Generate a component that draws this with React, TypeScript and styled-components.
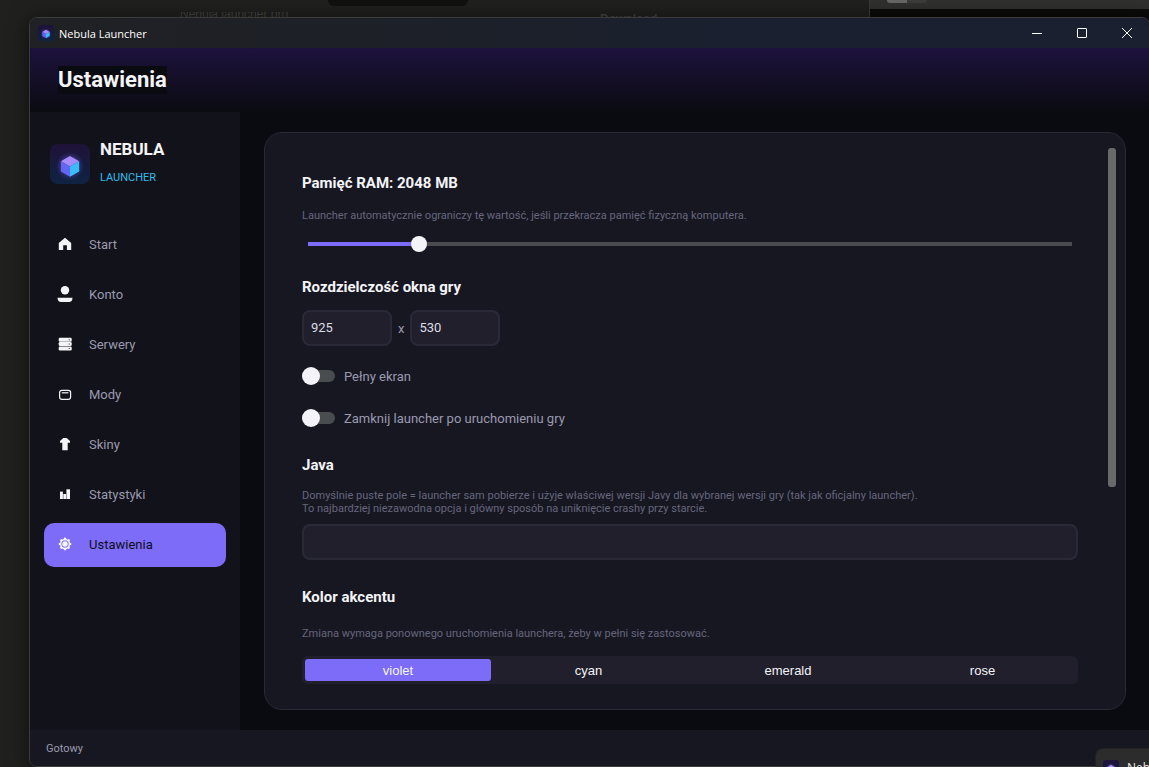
import React, { useState } from "react";
import styled, { createGlobalStyle, css } from "styled-components";

const GlobalStyle = createGlobalStyle`
  * { box-sizing: border-box; }
  html, body, #root { height: 100%; }
  body {
    margin: 0;
    background: #20201e;
    color: #f4f4f8;
    font-family: Roboto, "Liberation Sans", sans-serif;
    font-size: 13px;
    overflow: hidden;
  }
  button, input { font: inherit; color: inherit; }
  h1, h2, p { margin: 0; }
  svg { flex: none; }
`;

const Desktop = styled.div`
  position: relative;
  display: flex;
  flex-direction: column;
  height: 100%;
  overflow: hidden;
  background: #20201e;
`;

const Backdrop = styled.div`
  display: grid;
  grid-template-columns: minmax(0, 869fr) minmax(0, 280fr);
  flex: none;
  height: 25px;
  margin-bottom: -8px;
  overflow: hidden;
`;

const BackdropPage = styled.div`
  display: grid;
  grid-template-columns: 180fr 148fr 140fr 132fr 269fr;
  font: 12px/16px "Liberation Sans", sans-serif;
  color: #444442;
`;

const CardName = styled.span`
  grid-column: 2;
  display: flex;
  align-items: flex-end;
  height: 6px;
  margin-top: 12px;
  overflow: hidden;
  white-space: nowrap;
  line-height: 8px;
`;

const DarkPill = styled.span`
  height: 6px;
  border-radius: 0 0 6px 6px;
  background: #111110;
`;

const CardLink = styled.span`
  grid-column: 5;
  padding-top: 11px;
  font-weight: bold;
`;

const BackdropPanel = styled.div`
  padding-left: 17px;
  border-left: 1px solid #3a3a38;
  background: linear-gradient(#30302e 9px, #0c0c0b 9px);
`;

const PanelGrip = styled.div`
  width: 40px;
  height: 3px;
  border-radius: 0 0 3px 3px;
  background: linear-gradient(90deg, #666664 20px, #3c3c3a 20px);
`;

const Window = styled.main`
  display: flex;
  flex-direction: column;
  flex: 1;
  min-height: 0;
  margin: 0 -1px 0 29px;
  border: 1px solid #3c3c3c;
  border-radius: 8px;
  background: #0a0b10;
  box-shadow: 0 2px 20px rgba(0, 0, 0, 0.6);
  overflow: hidden;
  z-index: 1;
`;

const TitleBar = styled.header`
  display: flex;
  align-items: center;
  flex: none;
  height: 30px;
  padding-left: 8px;
  background: linear-gradient(90deg, #202124, #1c2029 40%, #1a2030 65%);
  font: 11px "Open Sans", "Noto Sans", sans-serif;
  color: #fff;
`;

const TitleText = styled.span`
  flex: 1;
  margin-left: 5px;
`;

const WindowButton = styled.button`
  display: grid;
  place-items: center;
  width: 45px;
  height: 30px;
  padding: 0;
  border: 0;
  background: none;
`;

const PageHeader = styled.div`
  display: flex;
  flex: none;
  align-items: center;
  height: 64px;
  padding-left: 28px;
  background: linear-gradient(#1d123d, #0a0b10);
`;

const PageTitle = styled.h1`
  background: #0a0b10;
  font-size: 22px;
  line-height: 28px;
  font-weight: 700;
`;

const Body = styled.div`
  display: flex;
  flex: 1;
  min-height: 0;
`;

const Sidebar = styled.aside`
  flex: none;
  width: 210px;
  padding: 27px 14px 0;
  background: #12121a;
`;

const Brand = styled.div`
  display: flex;
  gap: 10px;
  height: 84px;
  padding-left: 6px;
`;

const BrandMark = styled.span`
  margin-top: 5px;
`;

const BrandText = styled.div`
  display: grid;
  align-content: start;
  gap: 11px;
`;

const BrandName = styled.strong`
  font-size: 17px;
  line-height: 20px;
`;

const BrandSub = styled.span`
  font-size: 11px;
  line-height: 16px;
  color: #32bbe8;
`;

const Nav = styled.nav`
  display: grid;
  gap: 6px;
`;

const NavItem = styled.button<{ $active: boolean }>`
  display: flex;
  align-items: center;
  gap: 16px;
  height: 44px;
  padding: 0 13px 2px;
  border: 0;
  border-radius: 10px;
  background: ${(p) => (p.$active ? "#7c6cf8" : "transparent")};
  color: ${(p) => (p.$active ? "#0e0d18" : "#9a9aae")};
  text-align: left;
  cursor: pointer;
`;

const Content = styled.section`
  display: flex;
  flex: 1;
  min-width: 0;
  padding: 20px 23px 20px 24px;
`;

const Panel = styled.div`
  display: flex;
  flex: 1;
  min-width: 0;
  gap: 30px;
  padding: 15px 9px 15px 37px;
  border: 1px solid #2a2938;
  border-radius: 18px;
  background: #171722;
`;

const Form = styled.form`
  flex: 1;
  min-width: 0;
  padding-top: 25px;
  overflow: hidden;
`;

const ScrollTrack = styled.div`
  flex: none;
  width: 8px;
`;

const ScrollThumb = styled.div`
  height: 62%;
  border-radius: 3px;
  background: #696969;
`;

const Section = styled.section<{ $top?: number }>`
  margin-top: ${(p) => p.$top ?? 0}px;
`;

const SectionTitle = styled.h2`
  font-size: 15px;
  line-height: 20px;
  font-weight: 700;
`;

const Hint = styled.p<{ $top: number }>`
  margin-top: ${(p) => p.$top}px;
  font-size: 11px;
  line-height: 13px;
  color: #66667c;
`;

const Slider = styled.input`
  appearance: none;
  display: block;
  width: 100%;
  height: 16px;
  margin: 14px 0 0;
  background: none;

  &::-webkit-slider-runnable-track {
    height: 16px;
    background: linear-gradient(90deg, #7c6cf8 var(--fill), #4a4a4f var(--fill)) center / calc(100% - 12px) 4px no-repeat;
  }
  &::-webkit-slider-thumb {
    appearance: none;
    width: 16px;
    height: 16px;
    border-radius: 50%;
    background: #f4f4f8;
  }
`;

const field = css`
  height: 36px;
  padding: 0 7px 2px;
  border: 2px solid #2a2938;
  border-radius: 8px;
  background: #201f2b;
  color: #dcdce4;
  outline: 0;
`;

const SizeRow = styled.div`
  display: flex;
  align-items: center;
  gap: 6px;
  margin-top: 13px;
  color: #9a9aae;
`;

const SizeInput = styled.input`
  ${field}
  width: 90px;
`;

const PathInput = styled.input`
  ${field}
  display: block;
  width: 100%;
  margin-top: 9px;
`;

const SwitchRow = styled.label`
  display: flex;
  align-items: center;
  gap: 9px;
  height: 24px;
  margin-top: 18px;
  color: #9a9aae;
`;

const Switch = styled.input`
  appearance: none;
  display: grid;
  align-items: center;
  width: 33px;
  height: 18px;
  margin: 0;

  &::before, &::after { content: ""; grid-area: 1 / 1; }
  &::before { height: 12px; border-radius: 6px; background: #4a4d50; }
  &:checked::before { background: #7c6cf8; }
  &::after { width: 18px; height: 18px; border-radius: 50%; background: #f4f4f8; }
  &:checked::after { justify-self: end; }
`;

const Segments = styled.div`
  display: grid;
  grid-template-columns: 186fr 195fr 204fr 185fr;
  height: 28px;
  margin-top: 16px;
  padding: 3px;
  border-radius: 6px;
  background: #201f2b;
  font-family: "Liberation Sans", Arial, sans-serif;
`;

const Segment = styled.label`
  display: grid;
  place-items: center;
  border-radius: 3px;
  color: #f4f4f8;
  &:has(input:checked) { background: #7c6cf8; }
`;

const HiddenRadio = styled.input`
  appearance: none;
  position: absolute;
  margin: 0;
`;

const StatusBar = styled.footer`
  display: flex;
  align-items: center;
  flex: none;
  height: 36px;
  padding-left: 16px;
  background: #171722;
  font-size: 11px;
  color: #9a9aae;
`;

const Preview = styled.div`
  position: absolute;
  right: 0;
  bottom: 0;
  z-index: 2;
  display: flex;
  gap: 8px;
  width: 54px;
  height: 19px;
  padding: 11px 0 0 7px;
  border: 1px solid #222;
  border-width: 1px 0 0 1px;
  border-radius: 8px 0 0 0;
  background: #2c2c2c;
  color: #e8e8e8;
  font: 12px/16px "Open Sans", sans-serif;
  white-space: nowrap;
  overflow: hidden;
`;

function CubeLogo({ size, id }: { size: number; id: string }) {
  return (
    <svg width={size} height={size} viewBox="0 0 40 40" display="block">
      <defs>
        <linearGradient id={`${id}-bg`} x1="0" y1="0" x2="0" y2="1">
          <stop offset="0" stopColor="#1f1238" />
          <stop offset="1" stopColor="#0f2342" />
        </linearGradient>
        <radialGradient id={`${id}-glow`}>
          <stop offset="0.5" stopColor="#6d5cf0" stopOpacity="0.4" />
          <stop offset="1" stopColor="#6d5cf0" stopOpacity="0" />
        </radialGradient>
      </defs>
      <rect width="40" height="40" rx="8" fill={`url(#${id}-bg)`} />
      <circle cx="20" cy="22" r="14" fill={`url(#${id}-glow)`} />
      <path d="M20 12l9.200 5.200-9.200 5.300-9.200-5.300z" fill="#a78bfa" />
      <path d="M10.800 17.200l9.200 5.300v10.300l-9.200-5.300z" fill="#6366f1" />
      <path d="M29.200 17.200L20 22.500v10.300l9.200-5.300z" fill="#38bdf8" />
    </svg>
  );
}

const gearTeeth = [0, 45, 90, 135, 180, 225, 270, 315];

const icons: Record<string, React.ReactNode> = {
  Start: <path d="M8 1.800L14.200 7v7h-4.300V9.300H6.200V14H1.800V7z" />,
  Konto: (
    <>
      <circle cx="8" cy="4.200" r="4.200" />
      <path d="M.5 11.700h15c0 3-1.500 4.300-3.500 4.300H4C2 16 .5 14.700.5 11.700z" />
    </>
  ),
  Serwery: (
    <>
      <rect x="1.700" y="1.800" width="13" height="4" rx="1.200" />
      <rect x="1.700" y="6.100" width="13" height="3.800" rx="1.200" />
      <rect x="1.700" y="10.500" width="13" height="4" rx="1.200" />
      <g fill="#12121a">
        <circle cx="12.200" cy="3.800" r=".6" />
        <circle cx="12.200" cy="8" r=".6" />
        <circle cx="12.200" cy="12.500" r=".6" />
      </g>
    </>
  ),
  Mody: (
    <g fill="none" stroke="#f4f4f8" strokeWidth="1.200">
      <rect x="2.600" y="4.300" width="11" height="9" rx="2.200" />
      <path d="M4.800 6.800h6.600" />
    </g>
  ),
  Skiny: <path d="M6.300 2h3.400L13 5v1.700h-2.300v7.600H5.300V6.700H3V5z" />,
  Statystyki: (
    <>
      <path d="M3 5.600h2.900V13H3z" />
      <path d="M6.300 8h2.700v5H6.300z" />
      <path d="M9.400 3.300H13V13H9.400z" />
    </>
  ),
  Ustawienia: (
    <>
      <circle cx="8" cy="8" r="2.700" />
      <circle cx="8" cy="8" r="4.400" fill="none" stroke="#f4f4f8" strokeWidth="1.500" />
      {gearTeeth.map((angle) => (
        <circle key={angle} cx="8" cy="2.900" r="1.300" transform={`rotate(${angle} 8 8)`} />
      ))}
    </>
  ),
};

const accents = ["violet", "cyan", "emerald", "rose"];
const MIN_RAM = 1024;
const MAX_RAM = 8192;

export default function App() {
  const [page, setPage] = useState("Ustawienia");
  const [ram, setRam] = useState(2048);
  const [accent, setAccent] = useState("violet");
  const fill = ((ram - MIN_RAM) / (MAX_RAM - MIN_RAM)) * 100;

  return (
    <Desktop>
      <GlobalStyle />
      <Backdrop aria-hidden="true">
        <BackdropPage>
          <CardName>Nebula launcher pro</CardName>
          <DarkPill />
          <CardLink>Download</CardLink>
        </BackdropPage>
        <BackdropPanel>
          <PanelGrip />
        </BackdropPanel>
      </Backdrop>

      <Window>
        <TitleBar>
          <CubeLogo size={16} id="title" />
          <TitleText>Nebula Launcher</TitleText>
          <WindowButton aria-label="Minimalizuj">
            <svg width="10" height="10" stroke="#fff"><path d="M0 5.500h10" /></svg>
          </WindowButton>
          <WindowButton aria-label="Maksymalizuj">
            <svg width="10" height="10" stroke="#fff" fill="none"><rect x=".5" y=".5" width="9" height="9" rx=".5" /></svg>
          </WindowButton>
          <WindowButton aria-label="Zamknij">
            <svg width="10" height="10" stroke="#fff"><path d="M0 0l10 10M10 0L0 10" /></svg>
          </WindowButton>
        </TitleBar>

        <PageHeader>
          <PageTitle>Ustawienia</PageTitle>
        </PageHeader>

        <Body>
          <Sidebar>
            <Brand>
              <BrandMark><CubeLogo size={40} id="brand" /></BrandMark>
              <BrandText>
                <BrandName>NEBULA</BrandName>
                <BrandSub>LAUNCHER</BrandSub>
              </BrandText>
            </Brand>
            <Nav>
              {Object.keys(icons).map((name) => (
                <NavItem key={name} $active={page === name} onClick={() => setPage(name)}>
                  <svg width="16" height="16" viewBox="0 0 16 16" fill="#f4f4f8">{icons[name]}</svg>
                  {name}
                </NavItem>
              ))}
            </Nav>
          </Sidebar>

          <Content>
            <Panel>
              <Form>
                <Section>
                  <SectionTitle>Pamięć RAM: {ram} MB</SectionTitle>
                  <Hint $top={16}>Launcher automatycznie ograniczy tę wartość, jeśli przekracza pamięć fizyczną komputera.</Hint>
                  <Slider
                    type="range"
                    aria-label="Pamięć RAM"
                    min={MIN_RAM}
                    max={MAX_RAM}
                    value={ram}
                    onChange={(e) => setRam(Number(e.target.value))}
                    style={{ "--fill": `${fill}%` } as React.CSSProperties}
                  />
                </Section>

                <Section $top={25}>
                  <SectionTitle>Rozdzielczość okna gry</SectionTitle>
                  <SizeRow>
                    <SizeInput aria-label="Szerokość" defaultValue="925" />
                    x
                    <SizeInput aria-label="Wysokość" defaultValue="530" />
                  </SizeRow>
                  <SwitchRow><Switch type="checkbox" />Pełny ekran</SwitchRow>
                  <SwitchRow><Switch type="checkbox" />Zamknij launcher po uruchomieniu gry</SwitchRow>
                </Section>

                <Section $top={25}>
                  <SectionTitle>Java</SectionTitle>
                  <Hint $top={14}>
                    Domyślnie puste pole = launcher sam pobierze i użyje właściwej wersji Javy dla wybranej wersji gry (tak jak oficjalny launcher).
                    <br />
                    To najbardziej niezawodna opcja i główny sposób na uniknięcie crashy przy starcie.
                  </Hint>
                  <PathInput aria-label="Java" />
                </Section>

                <Section $top={27}>
                  <SectionTitle>Kolor akcentu</SectionTitle>
                  <Hint $top={20}>Zmiana wymaga ponownego uruchomienia launchera, żeby w pełni się zastosować.</Hint>
                  <Segments>
                    {accents.map((name) => (
                      <Segment key={name}>
                        <HiddenRadio type="radio" name="accent" checked={accent === name} onChange={() => setAccent(name)} />
                        {name}
                      </Segment>
                    ))}
                  </Segments>
                </Section>
              </Form>
              <ScrollTrack><ScrollThumb /></ScrollTrack>
            </Panel>
          </Content>
        </Body>

        <StatusBar>Gotowy</StatusBar>
      </Window>

      <Preview aria-hidden="true">
        <CubeLogo size={16} id="preview" />
        <span>Nebula Launcher</span>
      </Preview>
    </Desktop>
  );
}
